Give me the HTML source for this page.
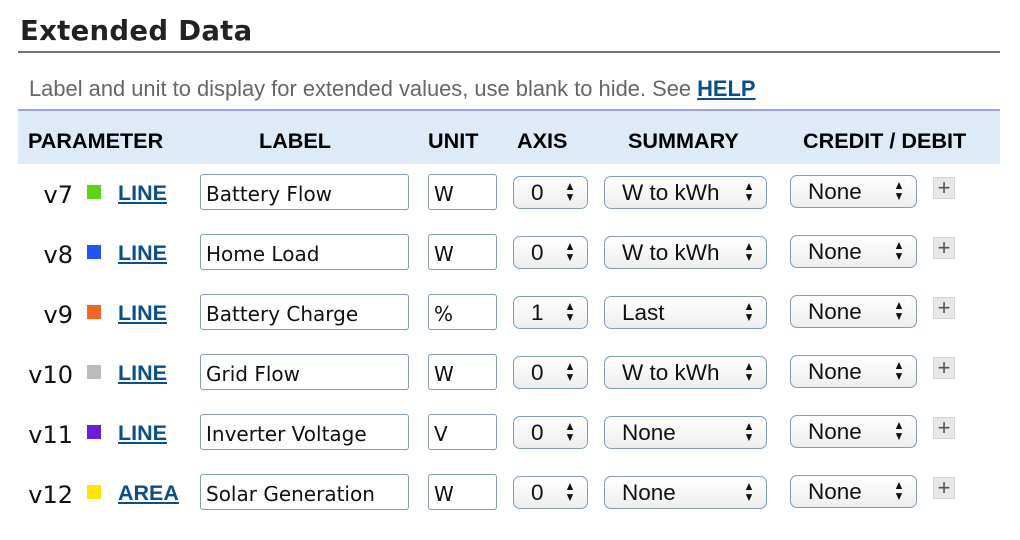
<!DOCTYPE html>
<html><head><style>
body{margin:0;width:1020px;height:540px;background:#fff;font-family:"Liberation Sans",sans-serif;position:relative;overflow:hidden}
.a{position:absolute}
h1{position:absolute;left:20px;top:15px;margin:0;font:bold 27.5px "DejaVu Sans","Liberation Sans",sans-serif;color:#222;letter-spacing:0.3px}
.rule{left:18px;top:51px;width:982px;height:2px;background:#777}
.desc{left:29px;top:76px;font-size:21.9px;color:#666}
.desc a{color:#0b4f8a;font-weight:bold;text-decoration:underline}
.hdr{left:18px;top:109px;width:982px;height:53px;background:#deeaf6;border-top:2px solid #9f9fef}
.th{position:absolute;font-weight:bold;font-size:21.6px;color:#000;transform:translateY(-50%)}
.v{position:absolute;width:48px;text-align:right;left:25px;font:24px "DejaVu Sans","Liberation Sans",sans-serif;color:#111}
.sq{position:absolute;left:87px;width:14px;height:14px}
.lk{position:absolute;left:118px;font-weight:bold;font-size:21.5px;color:#0b4f8a;text-decoration:underline}
.in{position:absolute;height:36px;border:1.5px solid #7f9bb8;border-radius:3px;box-sizing:border-box;font:20px "DejaVu Sans","Liberation Sans",sans-serif;padding:7px 0 0 5px;color:#111;background:#fff}
.sel{position:absolute;height:33px;border:1.5px solid #7f9bb8;border-radius:7px;box-sizing:border-box;font:22.5px "Liberation Sans",sans-serif;padding:3px 0 0 17px;color:#111;background:linear-gradient(#fff,#eee)}
.sel i{position:absolute;right:11px;top:4px;font-style:normal;font-size:12px;line-height:11px;text-align:center;transform:scaleX(0.9)}
.pl{position:absolute;left:933px;width:22px;height:22px;background:#e8e8e8;border:1px solid #d4d4d4;box-sizing:border-box;color:#555;font-size:22px;line-height:19px;text-align:center}
</style></head><body>
<h1>Extended Data</h1>
<div class="a rule"></div>
<div class="a desc">Label and unit to display for extended values, use blank to hide. See <a>HELP</a></div>
<div class="a hdr"></div>
<div class="th" style="left:28px;top:141px">PARAMETER</div>
<div class="th" style="left:259px;top:141px">LABEL</div>
<div class="th" style="left:428px;top:141px">UNIT</div>
<div class="th" style="left:517px;top:141px">AXIS</div>
<div class="th" style="left:628px;top:141px">SUMMARY</div>
<div class="th" style="left:803px;top:141px">CREDIT / DEBIT</div>

<div id="rows"></div>
<script>
var d=[["v7","#5ed11a","LINE","Battery Flow","W","0","W to kWh"],["v8","#2255f5","LINE","Home Load","W","0","W to kWh"],["v9","#f26522","LINE","Battery Charge","%","1","Last"],["v10","#bbbbbb","LINE","Grid Flow","W","0","W to kWh"],["v11","#6a1ed8","LINE","Inverter Voltage","V","0","None"],["v12","#ffe600","AREA","Solar Generation","W","0","None"]];
var h="";
d.forEach(function(r,i){var c=193+60*i;
h+='<div class="v" style="top:'+(c-12)+'px">'+r[0]+'</div>';
h+='<div class="sq" style="top:'+(c-8)+'px;background:'+r[1]+'"></div>';
h+='<div class="lk" style="top:'+(c-12)+'px">'+r[2]+'</div>';
h+='<div class="in" style="left:200px;width:209px;top:'+(c-19)+'px">'+r[3]+'</div>';
h+='<div class="in" style="left:428px;width:69px;top:'+(c-19)+'px">'+r[4]+'</div>';
var ar='<i>&#9650;<br>&#9660;</i>';
h+='<div class="sel" style="left:513px;width:75px;top:'+(c-17)+'px;padding-left:17px">'+r[5]+ar+'</div>';
h+='<div class="sel" style="left:604px;width:163px;top:'+(c-17)+'px">'+r[6]+ar+'</div>';
h+='<div class="sel" style="left:790px;width:127px;top:'+(c-18)+'px">None'+ar+'</div>';
h+='<div class="pl" style="top:'+(c-16)+'px">+</div>';
});
document.getElementById("rows").innerHTML=h;
</script>
</body></html>
